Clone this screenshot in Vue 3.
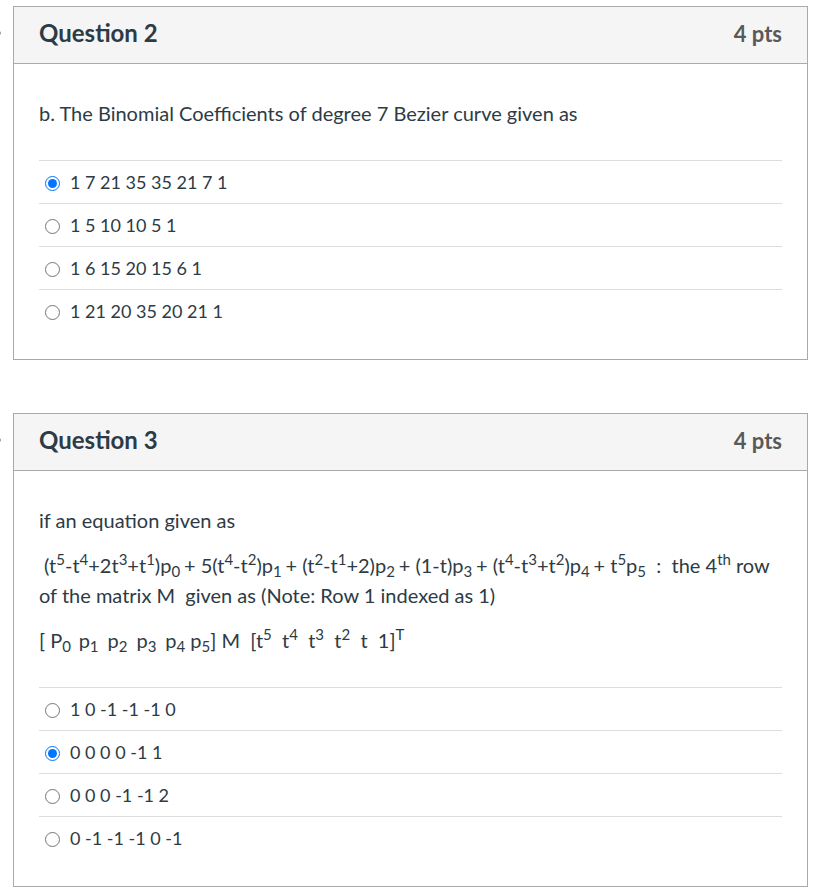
<script setup>
import { reactive } from 'vue'

const questions = reactive([
  {
    id: 2,
    points: 4,
    selected: 0,
    answers: ['1 7 21 35 35 21 7 1', '1 5 10 10 5 1', '1 6 15 20 15 6 1', '1 21 20 35 20 21 1'],
  },
  {
    id: 3,
    points: 4,
    selected: 1,
    answers: ['1 0 -1 -1 -1 0', '0 0 0 0 -1 1', '0 0 0 -1 -1 2', '0 -1 -1 -1 0 -1'],
  },
])
</script>

<template>
  <main class="quiz">
    <section v-for="q in questions" :key="q.id" class="question">
      <span class="flag" aria-hidden="true"></span>
      <header class="head">
        <h2 class="title">Question {{ q.id }}</h2>
        <span class="points">{{ q.points }} pts</span>
      </header>
      <div class="body">
        <div :id="`prompt-${q.id}`" class="prompt">
          <p v-if="q.id === 2">b. The Binomial Coefficients of degree 7 Bezier curve given as</p>
          <template v-else>
            <p>if an equation given as</p>
            <p>&nbsp;(t<sup>5</sup>-t<sup>4</sup>+2t<sup>3</sup>+t<sup>1</sup>)p<sub>0 </sub>+ 5(t<sup>4</sup>-t<sup>2</sup>)p<sub>1 </sub>+ (t<sup>2</sup>-t<sup>1</sup>+2)p<sub>2 </sub>+ (1-t)p<sub>3 </sub>+ (t<sup>4</sup>-t<sup>3</sup>+t<sup>2</sup>)p<sub>4 </sub>+ t<sup>5</sup>p<sub>5</sub>&nbsp; :&nbsp; the 4<sup>th</sup> row of the matrix M&nbsp; given as (Note: Row 1 indexed as 1)</p>
            <p>[ P<sub>0&nbsp; </sub>p<sub>1&nbsp;</sub> p<sub>2&nbsp;</sub> p<sub>3&nbsp;</sub> p<sub>4</sub> p<sub>5</sub>] M&nbsp; [t<sup>5</sup>&nbsp; t<sup>4</sup>&nbsp; t<sup>3</sup>&nbsp; t<sup>2</sup>&nbsp; t&nbsp; 1]<sup>T</sup></p>
          </template>
        </div>
        <div class="answers" role="radiogroup" :aria-labelledby="`prompt-${q.id}`">
          <label v-for="(a, i) in q.answers" :key="i" class="answer" :for="`q${q.id}-a${i}`">
            <input :id="`q${q.id}-a${i}`" v-model="q.selected" type="radio" :name="`q${q.id}`" :value="i" />
            <span>{{ a }}</span>
          </label>
        </div>
      </div>
    </section>
  </main>
</template>

<style>
body {
  margin: 0;
  background: #fff;
}
</style>

<style scoped>
.quiz {
  display: flex;
  flex-direction: column;
  gap: 53px;
  padding: 6px 13px 7px;
  font-family: Lato, "Liberation Sans", sans-serif;
  font-size: 20px;
  line-height: 30px;
  color: #2d3b45;
}
.question {
  position: relative;
  border: 1px solid #aaa;
}
.flag {
  position: absolute;
  left: -17px;
  top: 24px;
  width: 4px;
  height: 4px;
  border-radius: 2px;
  background: #8ba2b0;
}
.head {
  display: flex;
  justify-content: space-between;
  align-items: baseline;
  padding: 11px 25px 14px;
  background: #f5f5f5;
  border-bottom: 1px solid #aaa;
}
.title {
  margin: 0;
  font-size: 24px;
  font-weight: 700;
}
.points {
  font-size: 22px;
  font-weight: 700;
  color: #595959;
}
.body {
  padding: 34px 25px 27px;
}
.prompt {
  padding-bottom: 32px;
}
.prompt p {
  margin: 0;
  padding: 0;
}
.prompt p + p {
  margin-top: 15px;
}
sup,
sub {
  font-size: 15px;
  line-height: 0;
}
sup {
  vertical-align: 8px;
}
sub {
  vertical-align: -4px;
}
.answers {
  display: flex;
  flex-direction: column;
}
.answer {
  display: flex;
  align-items: center;
  gap: 10px;
  padding: 6px;
  border-top: 1px solid #ddd;
  font-size: 18px;
}
.answer input {
  width: 15px;
  height: 15px;
  margin: 2px 0 0;
  accent-color: #0075ff;
}
</style>
